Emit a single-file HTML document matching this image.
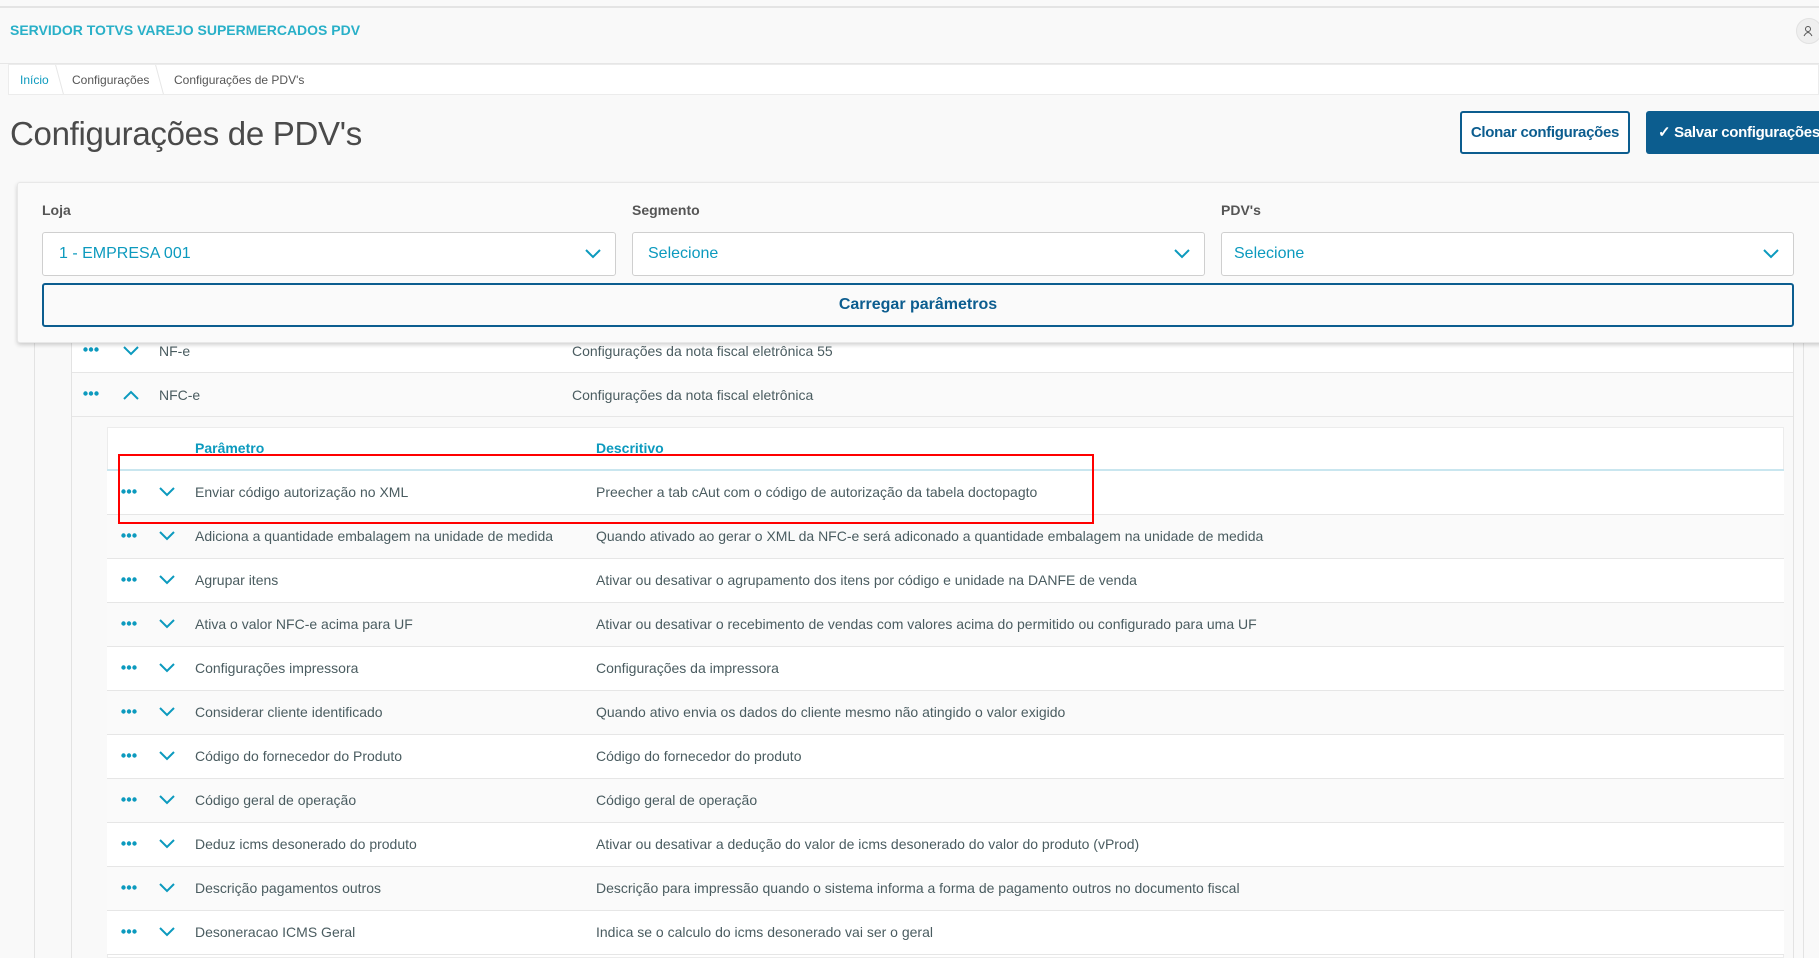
<!DOCTYPE html>
<html><head><meta charset="utf-8"><style>
*{box-sizing:border-box;margin:0;padding:0}
body{width:1819px;height:958px;overflow:hidden;background:#f9f9f9;font-family:"Liberation Sans",sans-serif;color:#4a5c60;position:relative}
.a{position:absolute}
.dots{position:absolute;width:16px;height:5px}
.chev{position:absolute;width:18px;height:10px}
.row{position:absolute;left:107px;width:1677px;height:44px;border-bottom:1px solid #e6e6e6;font-size:14px}
.row span{position:absolute;top:13px}
</style></head><body>
<svg width="0" height="0" style="position:absolute"><defs><g id="d"><circle cx="2.5" cy="2.5" r="2.2" fill="#0c9abe"/><circle cx="8" cy="2.5" r="2.2" fill="#0c9abe"/><circle cx="13.5" cy="2.5" r="2.2" fill="#0c9abe"/></g></defs></svg>
<div class="a" style="left:0;top:6px;width:1819px;height:2px;background:#e4e4e4"></div>
<div class="a" style="left:10px;top:22px;font-size:14px;font-weight:bold;color:#29b0c8">SERVIDOR TOTVS VAREJO SUPERMERCADOS PDV</div>
<div class="a" style="left:1796px;top:18px;width:26px;height:26px;border-radius:50%;background:#efefef;border:1px solid #e2e2e2"><svg class="a" style="left:5px;top:6px" width="12" height="12" viewBox="0 0 12 12"><circle cx="6" cy="4" r="2.5" fill="none" stroke="#555" stroke-width="1"/><path d="M2 11q4-7 8 0" fill="none" stroke="#555" stroke-width="1"/></svg></div>
<div class="a" style="left:0;top:63px;width:1819px;height:1px;background:#e6e6e6"></div>
<div class="a" style="left:8px;top:64px;width:1811px;height:31px;background:#fff;border:1px solid #ececec;font-size:12px">
<span class="a" style="left:11px;top:8px;color:#0c9abe">Início</span>
<span class="a" style="left:50px;top:0;width:1px;height:29px;background:#e6e6e6;transform:skewX(15deg)"></span>
<span class="a" style="left:63px;top:8px;color:#555">Configurações</span>
<span class="a" style="left:150px;top:0;width:1px;height:29px;background:#e6e6e6;transform:skewX(15deg)"></span>
<span class="a" style="left:165px;top:8px;color:#555">Configurações de PDV's</span>
</div>
<div class="a" style="left:10px;top:115px;font-size:33px;color:#4a4a4a;letter-spacing:-0.3px">Configurações de PDV's</div>
<div class="a" style="left:1460px;top:111px;width:170px;height:43px;border:2px solid #0c5d8f;border-radius:3px;background:#fff;color:#0c5d8f;font-size:15px;font-weight:bold;text-align:center;line-height:39px;letter-spacing:-0.3px">Clonar configurações</div>
<div class="a" style="left:1646px;top:111px;width:190px;height:43px;border-radius:3px;background:#0c5d8f;color:#fff;font-size:15px;font-weight:bold;line-height:43px;padding-left:12px;white-space:nowrap;letter-spacing:-0.3px">✓ Salvar configurações</div>
<div class="a" style="left:34px;top:330px;width:1px;height:628px;background:#e3e3e3"></div>
<div class="a" style="left:71px;top:330px;width:1px;height:628px;background:#e3e3e3"></div>
<div class="a" style="left:1793px;top:330px;width:1px;height:628px;background:#e3e3e3"></div>
<div class="a" style="left:1803px;top:330px;width:1px;height:628px;background:#e3e3e3"></div>
<div class="a" style="left:72px;top:330px;width:1721px;height:43px;background:#fff;border-bottom:1px solid #e6e6e6"></div>
<div class="a" style="left:72px;top:373px;width:1721px;height:44px;background:#fafafa;border-bottom:1px solid #e6e6e6"></div>
<svg class="dots" style="left:83px;top:347px"><use href="#d"/></svg>
<svg class="chev" style="left:122px;top:346px" viewBox="0 0 18 10"><path d="M2 1l7 7 7-7" fill="none" stroke="#0c9abe" stroke-width="2"/></svg>
<div class="a" style="left:159px;top:343px;font-size:14px">NF-e</div>
<div class="a" style="left:572px;top:343px;font-size:14px">Configurações da nota fiscal eletrônica 55</div>
<svg class="dots" style="left:83px;top:391px"><use href="#d"/></svg>
<svg class="chev" style="left:122px;top:390px" viewBox="0 0 18 10"><path d="M2 9l7-7 7 7" fill="none" stroke="#0c9abe" stroke-width="2"/></svg>
<div class="a" style="left:159px;top:387px;font-size:14px">NFC-e</div>
<div class="a" style="left:572px;top:387px;font-size:14px">Configurações da nota fiscal eletrônica</div>
<div class="a" style="left:107px;top:427px;width:1677px;height:531px;background:#fff;border:1px solid #ececec"></div>
<div class="a" style="left:195px;top:440px;font-size:14px;font-weight:bold;color:#0c9abe">Parâmetro</div>
<div class="a" style="left:596px;top:440px;font-size:14px;font-weight:bold;color:#0c9abe">Descritivo</div>
<div class="a" style="left:107px;top:469px;width:1677px;height:2px;background:#c9e6ef"></div>
<div class="row" style="top:471px;background:#fff"><svg class="dots" style="left:14px;top:18px"><use href="#d"/></svg><svg class="chev" style="left:51px;top:16px" viewBox="0 0 18 10"><path d="M2 1l7 7 7-7" fill="none" stroke="#0c9abe" stroke-width="2"/></svg><span style="left:88px">Enviar código autorização no XML</span><span style="left:489px">Preecher a tab cAut com o código de autorização da tabela doctopagto</span></div>
<div class="row" style="top:515px;background:#fafafa"><svg class="dots" style="left:14px;top:18px"><use href="#d"/></svg><svg class="chev" style="left:51px;top:16px" viewBox="0 0 18 10"><path d="M2 1l7 7 7-7" fill="none" stroke="#0c9abe" stroke-width="2"/></svg><span style="left:88px">Adiciona a quantidade embalagem na unidade de medida</span><span style="left:489px">Quando ativado ao gerar o XML da NFC-e será adiconado a quantidade embalagem na unidade de medida</span></div>
<div class="row" style="top:559px;background:#fff"><svg class="dots" style="left:14px;top:18px"><use href="#d"/></svg><svg class="chev" style="left:51px;top:16px" viewBox="0 0 18 10"><path d="M2 1l7 7 7-7" fill="none" stroke="#0c9abe" stroke-width="2"/></svg><span style="left:88px">Agrupar itens</span><span style="left:489px">Ativar ou desativar o agrupamento dos itens por código e unidade na DANFE de venda</span></div>
<div class="row" style="top:603px;background:#fafafa"><svg class="dots" style="left:14px;top:18px"><use href="#d"/></svg><svg class="chev" style="left:51px;top:16px" viewBox="0 0 18 10"><path d="M2 1l7 7 7-7" fill="none" stroke="#0c9abe" stroke-width="2"/></svg><span style="left:88px">Ativa o valor NFC-e acima para UF</span><span style="left:489px">Ativar ou desativar o recebimento de vendas com valores acima do permitido ou configurado para uma UF</span></div>
<div class="row" style="top:647px;background:#fff"><svg class="dots" style="left:14px;top:18px"><use href="#d"/></svg><svg class="chev" style="left:51px;top:16px" viewBox="0 0 18 10"><path d="M2 1l7 7 7-7" fill="none" stroke="#0c9abe" stroke-width="2"/></svg><span style="left:88px">Configurações impressora</span><span style="left:489px">Configurações da impressora</span></div>
<div class="row" style="top:691px;background:#fafafa"><svg class="dots" style="left:14px;top:18px"><use href="#d"/></svg><svg class="chev" style="left:51px;top:16px" viewBox="0 0 18 10"><path d="M2 1l7 7 7-7" fill="none" stroke="#0c9abe" stroke-width="2"/></svg><span style="left:88px">Considerar cliente identificado</span><span style="left:489px">Quando ativo envia os dados do cliente mesmo não atingido o valor exigido</span></div>
<div class="row" style="top:735px;background:#fff"><svg class="dots" style="left:14px;top:18px"><use href="#d"/></svg><svg class="chev" style="left:51px;top:16px" viewBox="0 0 18 10"><path d="M2 1l7 7 7-7" fill="none" stroke="#0c9abe" stroke-width="2"/></svg><span style="left:88px">Código do fornecedor do Produto</span><span style="left:489px">Código do fornecedor do produto</span></div>
<div class="row" style="top:779px;background:#fafafa"><svg class="dots" style="left:14px;top:18px"><use href="#d"/></svg><svg class="chev" style="left:51px;top:16px" viewBox="0 0 18 10"><path d="M2 1l7 7 7-7" fill="none" stroke="#0c9abe" stroke-width="2"/></svg><span style="left:88px">Código geral de operação</span><span style="left:489px">Código geral de operação</span></div>
<div class="row" style="top:823px;background:#fff"><svg class="dots" style="left:14px;top:18px"><use href="#d"/></svg><svg class="chev" style="left:51px;top:16px" viewBox="0 0 18 10"><path d="M2 1l7 7 7-7" fill="none" stroke="#0c9abe" stroke-width="2"/></svg><span style="left:88px">Deduz icms desonerado do produto</span><span style="left:489px">Ativar ou desativar a dedução do valor de icms desonerado do valor do produto (vProd)</span></div>
<div class="row" style="top:867px;background:#fafafa"><svg class="dots" style="left:14px;top:18px"><use href="#d"/></svg><svg class="chev" style="left:51px;top:16px" viewBox="0 0 18 10"><path d="M2 1l7 7 7-7" fill="none" stroke="#0c9abe" stroke-width="2"/></svg><span style="left:88px">Descrição pagamentos outros</span><span style="left:489px">Descrição para impressão quando o sistema informa a forma de pagamento outros no documento fiscal</span></div>
<div class="row" style="top:911px;background:#fff"><svg class="dots" style="left:14px;top:18px"><use href="#d"/></svg><svg class="chev" style="left:51px;top:16px" viewBox="0 0 18 10"><path d="M2 1l7 7 7-7" fill="none" stroke="#0c9abe" stroke-width="2"/></svg><span style="left:88px">Desoneracao ICMS Geral</span><span style="left:489px">Indica se o calculo do icms desonerado vai ser o geral</span></div>
<div class="a" style="left:118px;top:454px;width:976px;height:70px;border:2px solid #f00"></div>
<div class="a" style="left:17px;top:182px;width:1810px;height:161px;background:#fafafa;border:1px solid #e8e8e8;border-radius:3px;box-shadow:0 2px 4px rgba(0,0,0,.18)"></div>
<div class="a" style="left:42px;top:202px;font-size:14px;font-weight:bold;color:#555">Loja</div>
<div class="a" style="left:632px;top:202px;font-size:14px;font-weight:bold;color:#555">Segmento</div>
<div class="a" style="left:1221px;top:202px;font-size:14px;font-weight:bold;color:#555">PDV's</div>
<div class="a" style="left:42px;top:232px;width:574px;height:44px;background:#fff;border:1px solid #cfcfcf;border-radius:3px;font-size:16px;color:#0c9abe;padding:12px 0 0 16px">1 - EMPRESA 001<svg class="a" style="left:542px;top:16px;width:16px;height:10px" viewBox="0 0 16 10"><path d="M1 1l7 7 7-7" fill="none" stroke="#0c9abe" stroke-width="2"/></svg></div>
<div class="a" style="left:632px;top:232px;width:573px;height:44px;background:#fff;border:1px solid #cfcfcf;border-radius:3px;font-size:16px;color:#0c9abe;padding:12px 0 0 15px">Selecione<svg class="a" style="left:541px;top:16px;width:16px;height:10px" viewBox="0 0 16 10"><path d="M1 1l7 7 7-7" fill="none" stroke="#0c9abe" stroke-width="2"/></svg></div>
<div class="a" style="left:1221px;top:232px;width:573px;height:44px;background:#fff;border:1px solid #cfcfcf;border-radius:3px;font-size:16px;color:#0c9abe;padding:12px 0 0 12px">Selecione<svg class="a" style="left:541px;top:16px;width:16px;height:10px" viewBox="0 0 16 10"><path d="M1 1l7 7 7-7" fill="none" stroke="#0c9abe" stroke-width="2"/></svg></div>
<div class="a" style="left:42px;top:283px;width:1752px;height:44px;border:2px solid #0c5d8f;border-radius:3px;background:#fafafa;color:#0c5d8f;font-size:16px;font-weight:bold;text-align:center;line-height:40px">Carregar parâmetros</div>
</body></html>
